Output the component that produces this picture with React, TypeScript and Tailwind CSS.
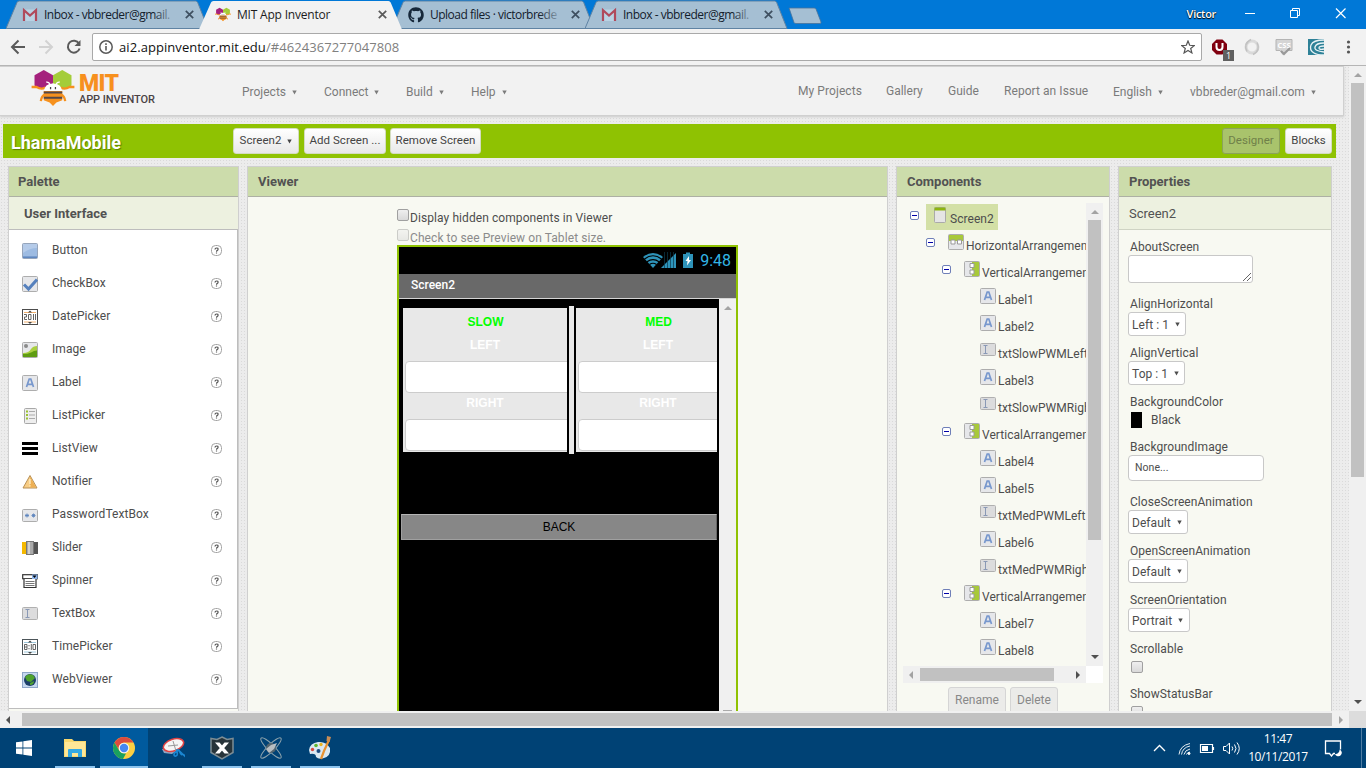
import React from "react";
import { FaGithub } from "react-icons/fa";

const CHROME_FONT = "font-['Open_Sans','Noto_Sans',sans-serif]";

/* ---------- browser chrome ---------- */

function Gmail() {
  return (
    <svg width="16" height="16" viewBox="0 0 16 16">
      <rect x="1" y="2.500" width="14" height="11.500" fill="#b9d3e4" />
      <path d="M2 14V3.200l6 5.300 6-5.300V14" fill="none" stroke="#b04a5c" strokeWidth="2.200" />
    </svg>
  );
}

function Bee({ className, w, h }: { className?: string; w: number; h: number }) {
  return (
    <svg className={className} width={w} height={h} viewBox="0 0 44 37">
      <path d="M3 5.500 12.500 0 22 5.500v8l-7 6H8l-5-3.500z" fill="#a5217d" />
      <path d="M22 5.500 31.500 0 41 5.500V16l-5 3.500h-7l-7-6z" fill="#a4cd39" />
      <path d="M0 17.500h5q5 3 9 .5M44 17.500h-5q-5 3-9 .5" fill="none" stroke="#f6911e" strokeWidth="2.400" />
      <path d="M14 25q-4 2-4.500 7M30 25q4 2 4.500 7" fill="none" stroke="#f6911e" strokeWidth="2.400" />
      <path d="M13 22q0-8 9-8t9 8z" fill="#fff" />
      <path d="M15 12.500q3-.5 4 3M29 12.500q-3-.5-4 3" stroke="#fff" strokeWidth="1.400" fill="none" />
      <path d="M19.500 17.500v2.200M24.500 17.500v2.200" stroke="#444" strokeWidth="1.300" />
      <path d="M12.500 21.500h19V31l-6 2.500L22 37l-3.500-3.500-6-2.500z" fill="#f6911e" />
      <path d="M12.500 23.200h19M12.500 28.500h19" stroke="#54484a" strokeWidth="2" />
    </svg>
  );
}

function Tab({ icon, title, active, fade, tracking }: { icon: React.ReactNode; title: string; active?: boolean; fade?: boolean; tracking: string }) {
  return (
    <div className={`relative -mr-[10px] h-[29px] w-[203px] shrink-0 ${active ? "z-10" : "z-0"}`}>
      <svg className="absolute inset-0" width="203" height="29">
        <path
          d={active ? "M0 29.500 12 2.500Q12.500 1 14.500 1H189.500Q191 1 191.700 2.500L203 29.500z" : "M0 28.500 11 2.500Q11.500 1 13.500 1H189.500Q191 1 191.700 2.500L202 28.500z"}
          fill={active ? "#f2f2f2" : "#a5bfd3"}
          stroke={active ? "none" : "#5f83a3"}
          strokeWidth="1"
        />
      </svg>
      <div className="relative flex h-[29px] items-center pl-4">
        {icon}
        <span className={`relative ml-[6px] w-[133px] overflow-hidden text-[12px] leading-[18px] whitespace-nowrap ${tracking} ${active ? "text-[#1c1c1c]" : "text-[#13202d]"}`}>
          {title}
          {fade && <span className="absolute inset-y-0 right-0 w-6 bg-linear-to-r from-[#a5bfd300] to-[#a5bfd3]" />}
        </span>
        <svg className="ml-[8px]" width="9" height="9" viewBox="0 0 9 9">
          <path d="M.8.8l7.400 7.400M8.200.8.8 8.200" stroke={active ? "#5a5a5a" : "#3e4f60"} strokeWidth="1.700" />
        </svg>
      </div>
    </div>
  );
}

function TabStrip() {
  return (
    <div className={`flex h-[29px] shrink-0 bg-[#0078d7] pl-[6px] ${CHROME_FONT}`}>
      <Tab icon={<Gmail />} title="Inbox - vbbreder@gmail." fade tracking="tracking-[-0.5px]" />
      <Tab icon={<Bee w={16} h={15} />} title="MIT App Inventor" active tracking="tracking-[-0.2px]" />
      <Tab icon={<FaGithub size={16} color="#16283a" />} title="Upload files · victorbrede" fade tracking="tracking-[-0.5px]" />
      <Tab icon={<Gmail />} title="Inbox - vbbreder@gmail." fade tracking="tracking-[-0.5px]" />
      <svg className="mt-[7px] ml-[10px]" width="34" height="18">
        <path d="M1 1h25q1.500 0 2 1l5 13q.5 1.500-1 1.500H8q-1.500 0-2-1z" fill="#a5bfd3" stroke="#47729a" strokeWidth=".8" />
      </svg>
      <div className="ml-auto flex items-start pr-[18px] pt-[5px]">
        <span className="mt-[1px] mr-[28px] text-[11px] leading-4 font-semibold tracking-[-0.3px] text-white [text-shadow:0_0_1px_#000,0_1px_1px_#000]">Victor</span>
        <svg width="104" height="18" className="text-white" fill="none" stroke="currentColor">
          <path d="M1 8.500h10M46.500 5.500h7v7h-7zM48.500 5.500v-2h7v7h-2" />
          <path d="m92 3.500 9.500 9.500M101.500 3.500 92 13" strokeWidth="1.200" />
        </svg>
      </div>
    </div>
  );
}

function Toolbar() {
  return (
    <div className={`flex h-[37px] shrink-0 items-start border-b border-[#b5b5b5] bg-[#f2f2f2] pt-1 ${CHROME_FONT}`}>
      <svg width="92" height="28" viewBox="0 0 92 28" fill="none" strokeWidth="2">
        <path d="M25 14H12.500M18.500 7.500 12 14l6.500 6.500" stroke="#5a5a5a" />
        <path d="M39 14h12.500M45.500 7.500 52 14l-6.500 6.500" stroke="#d2d2d2" />
        <path d="M79 10.500a6 6 0 1 0 .6 5" stroke="#5a5a5a" />
        <path d="M80.500 7v6h-6z" fill="#5a5a5a" />
      </svg>
      <div className="flex h-[28px] w-[1110px] items-center rounded-[2px] border border-[#a9a9a9] bg-white pl-[6px]">
        <svg width="14" height="14" viewBox="0 0 14 14" fill="none" stroke="#5a5a5a">
          <circle cx="7" cy="7" r="6.200" strokeWidth="1.500" />
          <path d="M7 6v4.500M7 3.300v1.700" strokeWidth="1.600" />
        </svg>
        <span className="ml-[6px] text-[13px] leading-[18px] tracking-[0.07px] whitespace-nowrap text-[#111]">
          ai2.appinventor.mit.edu<span className="text-[#808080]">/#4624367277047808</span>
        </span>
        <svg className="mr-[6px] ml-auto" width="14" height="14" viewBox="0 0 14 14">
          <path d="m7 1 1.700 4.300 4.500.3-3.500 2.900 1.200 4.400L7 10.400l-3.900 2.500 1.200-4.400L.8 5.600l4.500-.3z" fill="none" stroke="#555" strokeWidth="1.200" />
        </svg>
      </div>
      <svg className="ml-[8px]" width="150" height="30" viewBox="0 0 150 30">
        <path d="M5.500 6h6l4.500 4.500v6L11.500 21h-6L1 16.500v-6z" transform="translate(1 .5)" fill="#800010" />
        <path d="M6.500 10v4q0 3 3 3t3-3v-4" fill="none" stroke="#fff" strokeWidth="2" />
        <rect x="13" y="17" width="11" height="11" fill="#606060" />
        <text x="18.500" y="26" fontSize="9" fill="#fff" textAnchor="middle" fontFamily="Open Sans">1</text>
        <circle cx="42" cy="14" r="6" fill="none" stroke="#dadada" strokeWidth="3" />
        <path d="M41 6.500q-8 4-4 12M43 21.500q8-4 4-12" fill="none" stroke="#c2c2c2" strokeWidth="1.500" />
        <path d="M66 6.500h16v11h-6l-3 4-3-4h-4z" fill="#d5d5d5" stroke="#b4b4b4" />
        <text x="74" y="15" fontSize="7.500" fontWeight="bold" fill="#fff" textAnchor="middle" fontFamily="Open Sans">CSS</text>
        <path d="m71 18 3 3 6-6" fill="none" stroke="#999" strokeWidth="2" />
        <rect x="98" y="6" width="16" height="16" fill="#2e8197" />
        <path d="M114 7q-11 0-13 5t3 8q3 2 10 2M114 10q-8 0-9 4t9 5M114 13q-5 0-5 2t5 1" fill="none" stroke="#e8f2f5" strokeWidth="1.300" />
        <g fill="#555"><circle cx="138.500" cy="9" r="1.600" /><circle cx="138.500" cy="14" r="1.600" /><circle cx="138.500" cy="19" r="1.600" /></g>
      </svg>
    </div>
  );
}

/* ---------- small shared pieces ---------- */

function Caret({ className = "" }: { className?: string }) {
  return (
    <svg className={className} width="5" height="5" viewBox="0 0 5 5">
      <path d="M.3.500h4.400L2.500 4.500z" fill="currentColor" />
    </svg>
  );
}

function Arrow({ dir, color }: { dir: "up" | "down" | "left" | "right"; color: string }) {
  const d = { up: "M0 6 4 2l4 4z", down: "M0 2h8L4 6z", left: "M6 0v8L2 4z", right: "M2 0v8l4-4z" }[dir];
  return (
    <svg width="8" height="8" viewBox="0 0 8 8" className="shrink-0">
      <path d={d} fill={color} />
    </svg>
  );
}

function CheckBox({ faded }: { faded?: boolean }) {
  return <span className={`block size-[12px] shrink-0 rounded-[2px] border border-[#a0a0a0] bg-linear-to-b from-[#efefef] to-[#d9d9d9] ${faded ? "opacity-50" : ""}`} />;
}

type IconKind = "button" | "checkbox" | "date" | "image" | "label" | "listpicker" | "listview" | "notifier" | "password" | "slider" | "spinner" | "textbox" | "time" | "web" | "screen" | "horizontal" | "vertical";

function Plate({ y = 0.5, h = 15 }: { y?: number; h?: number }) {
  return <rect x=".5" y={y} width="15" height={h} rx="1" fill="#e6e7ea" stroke="#adadad" />;
}

function Icon({ kind }: { kind: IconKind }) {
  const art: Record<IconKind, React.ReactNode> = {
    button: (<><rect x=".5" y=".5" width="15" height="15" rx="1" fill="#9dbbe2" stroke="#96a5bb" /><path d="M1 1h14v4Q8 5 1 10z" fill="#b5cbe9" /><path d="M1 14.200h14" stroke="#5f87c0" strokeWidth="1.600" /></>),
    checkbox: (<><Plate /><path d="M2 8.500 6.500 13 15 3.500" fill="none" stroke="#5580bd" strokeWidth="3" /></>),
    date: (<><rect x=".5" y=".5" width="15" height="15" fill="#fff" stroke="#4c4c4c" /><path d="M2 3.500h12M2 13h12" stroke="#f0b070" /><path d="M6 3.500 8 1.500l2 2zM6 13l2 2 2-2z" fill="#444" /><path d="M2 5.500h2.500V8H2.500v2.500H5M6.500 5.500H9v5H6.500zM11.500 5v6M13.500 5v6" fill="none" stroke="#555" strokeWidth=".9" /></>),
    image: (<><Plate /><circle cx="4" cy="4" r="2" fill="#8b8b8b" /><path d="M1 11q6 0 8-4 2-3 6-3v11H1z" fill="#a9cf40" /><path d="M1 12q5 0 8-1.500 3-2 6-2V15H1z" fill="#5f9c12" /></>),
    label: (<><Plate /><path d="m4.500 12 2.700-8h1.600l2.700 8M5.800 9.300h4.400" fill="none" stroke="#7797cd" strokeWidth="1.700" /></>),
    listpicker: (<><rect x="2.500" y=".5" width="12" height="15" rx="1" fill="#eee" stroke="#a8a8a8" /><path d="M4 3.500h2M4 7h2M4 10.500h2" stroke="#9bc332" strokeWidth="2" /><path d="M7 3.500h6M7 7h6M7 10.500h6" stroke="#aaa" /></>),
    listview: (<path d="M0 2.500h16M0 7.500h16M0 12.500h16" stroke="#000" strokeWidth="3" />),
    notifier: (<><path d="M8 1.500 15 14H1z" fill="#f8cd85" stroke="#b89056" /><path d="M8 2.500v11H14z" fill="#eeb054" /><path d="M8 5v5M8 11.300v1.300" stroke="#fff3d0" strokeWidth="1.200" /></>),
    password: (<><rect x=".5" y="2.500" width="15" height="12" rx="1" fill="#e6e7ea" stroke="#adadad" /><path d="M3 8.500h4M5 6.500v4M3.600 7.100l2.800 2.800M6.400 7.100 3.600 9.900M9.500 8.500h4M11.500 6.500v4M10.100 7.100l2.800 2.800M12.900 7.100l-2.800 2.800" stroke="#5b83bd" strokeWidth=".9" /></>),
    slider: (<><path d="M0 2h5v12H0z" fill="#f4b800" /><path d="M11 2h5v12h-5z" fill="#555" /><rect x="4.500" y="1.500" width="7" height="13" fill="#aaa" stroke="#777" /><path d="M7 2v12" stroke="#ddd" strokeWidth="1.500" /></>),
    spinner: (<><rect x=".7" y="1.700" width="14.600" height="4" fill="#fff" stroke="#333" strokeWidth="1.200" /><rect x="10" y="1.500" width="5.500" height="4.500" fill="#8db4ea" /><path d="M10.500 2.500h4L12.500 5z" fill="#000" /><path d="M2 6v8.500h12V6" fill="#fff" stroke="#333" strokeWidth="1.200" /><path d="M3.500 8.500h9M3.500 10.500h9M3.500 12.500h9" stroke="#777" /></>),
    textbox: (<><rect x=".5" y="1.500" width="15" height="12" rx="1" fill="#dcdcdd" stroke="#b0b0b0" /><path d="M3.500 3.500h4M3.500 11.500h4M5.500 3.500v8" stroke="#8a99b5" /></>),
    time: (<><rect x=".5" y=".5" width="15" height="15" fill="#fff" stroke="#4c5559" /><path d="M2 3.500h12M2 13h12" stroke="#9fc8dc" /><path d="M6 3.500 8 1.500l2 2zM6 13l2 2 2-2z" fill="#444" /><path d="M2.500 5.500H5v5H2.500zM2.500 8H5M7 6v1.300M7 9v1.300M9.300 5v6M11 5.500h2.500v5H11z" fill="none" stroke="#555" strokeWidth=".9" /></>),
    web: (<><rect x=".5" y=".5" width="15" height="15" fill="#c5d8ef" stroke="#8ea6c8" /><circle cx="8" cy="8" r="6" fill="#1c3f68" /><path d="M3 5q3-4 8-2l2 3-4 4-4-1zM8 11l4-2q0 4-4 4z" fill="#4fa32e" /></>),
    screen: (<><rect x="2.500" y=".5" width="11" height="15" rx="1" fill="#e5e5e5" stroke="#aaa" /><path d="M2.500 2h11" stroke="#8db50f" strokeWidth="3" /></>),
    horizontal: (<><Plate /><path d="M1 1h14v6H1z" fill="#a8c93a" /><path d="M3 6h4v4H3zM9.500 6h4v4h-4z" fill="#fff" stroke="#999" /></>),
    vertical: (<><Plate /><path d="M8 1h7v14H8z" fill="#a8c93a" /><path d="M6 2.500h4v4H6zM6 9h4v4H6z" fill="#fff" stroke="#999" /></>),
  };
  return <svg width="16" height="16" viewBox="0 0 16 16" className="shrink-0">{art[kind]}</svg>;
}

/* ---------- app header ---------- */

function MenuItem({ label, caret = true, className }: { label: string; caret?: boolean; className: string }) {
  return (
    <span className={`flex h-[48px] shrink-0 items-center whitespace-nowrap ${caret ? "pt-[2px]" : ""} ${className}`}>
      {label}
      {caret && <Caret className="ml-[6px]" />}
    </span>
  );
}

function AppHeader() {
  return (
    <div className="flex h-[50px] w-[1344px] shrink-0 border-t border-r border-b border-[#d0d0d0] bg-[#f2f2f2] text-[12px] leading-[20px] text-[#7b7b7b] shadow-[0_1px_2px_#ccc]">
      <div className="flex w-[242px] pt-[3px] pl-[31px] leading-none">
        <Bee w={44} h={36} />
        <div className="pl-1">
          <div className="mt-[3px] text-[23px] leading-[22px] font-black tracking-[-0.6px] text-[#f7901e]">MIT</div>
          <div className="text-[11px] leading-[10px] font-medium tracking-[-0.1px] whitespace-nowrap text-[#4b4345]">APP INVENTOR</div>
        </div>
      </div>
      <MenuItem label="Projects" className="w-[82px]" />
      <MenuItem label="Connect" className="w-[82px]" />
      <MenuItem label="Build" className="w-[65px]" />
      <MenuItem label="Help" className="w-[327px]" />
      <MenuItem label="My Projects" caret={false} className="w-[88px] tracking-[0.08px]" />
      <MenuItem label="Gallery" caret={false} className="w-[62px]" />
      <MenuItem label="Guide" caret={false} className="w-[56px]" />
      <MenuItem label="Report an Issue" caret={false} className="w-[109px] tracking-[0.06px]" />
      <MenuItem label="English" className="w-[77px]" />
      <MenuItem label="vbbreder@gmail.com" className="w-[140px] tracking-[0.05px]" />
    </div>
  );
}

function BarButton({ children, className }: { children: React.ReactNode; className: string }) {
  return (
    <div className={`flex h-[26px] items-center justify-center rounded-[3px] border text-[11.5px] tracking-[0.04px] whitespace-nowrap ${className}`}>{children}</div>
  );
}

function ProjectBar() {
  const light = "border-[#d4dcc0] bg-linear-to-b from-white to-[#e8e8e8] text-[#444]";
  return (
    <div className="mt-2 ml-[3px] flex h-[34px] w-[1333px] shrink-0 items-center bg-[#8fc202] pr-1">
      <div className="w-[230px] pt-[2px] pl-2 text-[18px] font-bold text-white [text-shadow:1px_1px_1px_#5d7f00]">LhamaMobile</div>
      <BarButton className={`w-[66px] ${light}`}>Screen2<Caret className="ml-[6px]" /></BarButton>
      <BarButton className={`ml-[5px] w-[82px] ${light}`}>Add Screen ...</BarButton>
      <BarButton className={`ml-[4px] w-[91px] ${light}`}>Remove Screen</BarButton>
      <BarButton className="ml-auto w-[58px] border-[#8ba35a] bg-[#a9c36c] text-[#6f8049]">Designer</BarButton>
      <BarButton className={`ml-[5px] w-[47px] ${light}`}>Blocks</BarButton>
    </div>
  );
}

/* ---------- panels ---------- */

function Panel({ title, className, pad = "pl-[10px]", children }: { title: string; className: string; pad?: string; children: React.ReactNode }) {
  return (
    <section className={`flex flex-col overflow-hidden border border-b-0 border-[#cfcfcf] bg-[#f8f9f2] ${className}`}>
      <h2 className={`h-[30px] shrink-0 border-b border-[#adb0a4] bg-[#ccdcab] text-[13px] leading-[29px] font-bold text-[#525252] ${pad}`}>{title}</h2>
      {children}
    </section>
  );
}

const PALETTE: [IconKind, string][] = [
  ["button", "Button"], ["checkbox", "CheckBox"], ["date", "DatePicker"], ["image", "Image"], ["label", "Label"],
  ["listpicker", "ListPicker"], ["listview", "ListView"], ["notifier", "Notifier"], ["password", "PasswordTextBox"],
  ["slider", "Slider"], ["spinner", "Spinner"], ["textbox", "TextBox"], ["time", "TimePicker"], ["web", "WebViewer"],
];

function Palette() {
  return (
    <Panel title="Palette" pad="pl-[9px]" className="ml-[8px] w-[231px]">
      <div className="h-[32px] shrink-0 bg-[#edf1e0] pl-[15px] text-[13px] leading-[34px] font-bold text-[#525252]">User Interface</div>
      <div className="h-[480px] shrink-0 border border-l-0 border-[#bdbdbd] bg-white pt-[4px]">
        {PALETTE.map(([kind, name]) => (
          <div key={name} className="flex h-[33px] items-center pr-[15px] pl-[13px]">
            <Icon kind={kind} />
            <span className="-mt-[2px] ml-[14px] text-[12px] tracking-[0.05px] text-[#4d4d4d]">{name}</span>
            <svg className="-mt-px ml-auto" width="11" height="11" viewBox="0 0 11 11" fill="none">
              <rect x=".5" y=".5" width="10" height="10" rx="4" stroke="#a3a3a3" />
              <path d="M4 4.400q0-1.400 1.600-1.400t1.500 1.300q0 1-1.500 1.700v.7M5.500 7.500v1" stroke="#555" strokeWidth="1.200" />
            </svg>
          </div>
        ))}
      </div>
    </Panel>
  );
}

function SpeedColumn({ title, className }: { title: string; className: string }) {
  return (
    <div className={`mt-[9px] h-[144px] shrink-0 overflow-hidden bg-[#e8e8e8] ${className}`}>
      <div className="flex w-[164px] flex-col pt-[3px] pl-[2px] text-center font-bold text-white">
        <div className="h-[23px] pr-px leading-[23px] text-[#00ff00]">{title}</div>
        <div className="h-[27px] pr-[2px] leading-[23px]">LEFT</div>
        <div className="h-[32px] w-[180px] rounded-[4px] border border-[#ccc] bg-white" />
        <div className="h-[26px] pr-[2px] leading-[21px]">RIGHT</div>
        <div className="h-[32px] w-[180px] rounded-[4px] border border-[#ccc] bg-white" />
      </div>
    </div>
  );
}

function Viewer() {
  return (
    <Panel title="Viewer" className="ml-[8px] w-[641px]">
      <div className="ml-[149px] w-[341px] text-[12px] tracking-[0.08px]">
        <div className="mt-[10px] flex h-[20px] items-center text-[#4d4d4d]">
          <span className="-mt-[4px]"><CheckBox /></span><span className="ml-[1px] pt-[2px]">Display hidden components in Viewer</span>
        </div>
        <div className="flex h-[18px] items-center text-[#8b8b8b]">
          <span className="-mt-[2px]"><CheckBox faded /></span><span className="ml-[1px] pt-[3px]">Check to see Preview on Tablet size.</span>
        </div>
        <div className="h-[480px] border-2 border-[#8fc202] bg-black tracking-normal">
          <div className="flex h-[27px] items-center justify-end pr-[5px]">
            <svg width="51" height="17" viewBox="0 0 51 17">
              <path d="M0 5Q10-3 20 5L10 16z" fill="#2e93b9" />
              <path d="M1.500 7Q10 .5 18.500 7M4 9.800Q10 5.500 16 9.800M6.500 12.500q3.500-2.500 7 0" fill="none" stroke="#000" strokeWidth="1.200" />
              <path d="M33 1v15H18z" fill="#2e93b9" />
              <path d="M21.500 0v16M24.500 0v16M27.500 0v16M30.500 0v16" stroke="#0c3b4d" strokeWidth=".7" />
              <path d="M40 2h3V.5h4V2h3v14H40z" fill="#2e93b9" />
              <path d="m46 4-3.500 5h2L44 13.500 48 8h-2z" fill="#fff" />
            </svg>
            <span className="ml-[6px] text-[16px] leading-[27px] text-[#33b5e5]">9:48</span>
          </div>
          <div className="h-[25px] border-b border-[#d5d5d5] bg-[#696969] pl-[12px] leading-[22px] font-medium text-white">Screen2</div>
          <div className="flex h-[424px]">
            <div className="w-[320px]">
              <div className="flex h-[215px] pr-[2px] pl-[4px] font-['Liberation_Sans',Arial,sans-serif]">
                <SpeedColumn title="SLOW" className="w-[164px]" />
                <div className="mt-[7px] ml-[2px] h-[148px] w-[5px] shrink-0 bg-[#e8e8e8]" />
                <SpeedColumn title="MED" className="ml-[2px] w-[141px]" />
              </div>
              <div className="mr-[2px] ml-[2px] h-[26px] border border-t-[#b5b5b5] border-r-[#666] border-b-[#a0a0a0] border-l-[#a0a0a0] bg-[#878787] text-center font-['Liberation_Sans',Arial,sans-serif] leading-[24px] text-black">BACK</div>
            </div>
            <div className="flex w-[17px] flex-col items-center bg-[#f0f0f0] pt-[5px]">
              <Arrow dir="up" color="#a3a3a3" />
              <span className="mt-[398px] h-[2px] w-[9px] bg-[#aaa]" />
            </div>
          </div>
        </div>
      </div>
    </Panel>
  );
}

const TREE: [number, IconKind, string, boolean][] = [
  [0, "screen", "Screen2", true],
  [1, "horizontal", "HorizontalArrangement1", true],
  [2, "vertical", "VerticalArrangement1", true],
  [3, "label", "Label1", false],
  [3, "label", "Label2", false],
  [3, "textbox", "txtSlowPWMLeft", false],
  [3, "label", "Label3", false],
  [3, "textbox", "txtSlowPWMRight", false],
  [2, "vertical", "VerticalArrangement2", true],
  [3, "label", "Label4", false],
  [3, "label", "Label5", false],
  [3, "textbox", "txtMedPWMLeft", false],
  [3, "label", "Label6", false],
  [3, "textbox", "txtMedPWMRight", false],
  [2, "vertical", "VerticalArrangement3", true],
  [3, "label", "Label7", false],
  [3, "label", "Label8", false],
];

const INDENT = ["pl-[7px]", "pl-[23px]", "pl-[39px]", "pl-[55px]"];

function Components() {
  return (
    <Panel title="Components" className="ml-[8px] w-[214px]">
      <div className="mt-[6px] ml-[6px] flex h-[463px] w-[200px] shrink-0">
        <div className="w-[183px] overflow-hidden pt-[1px]">
          {TREE.map(([depth, kind, name, open]) => (
            <div key={name} className={`flex h-[27px] ${INDENT[depth]}`}>
              <span className="w-[16px] shrink-0 pt-[7px]">
                {open && (
                  <svg width="9" height="9" viewBox="0 0 9 9">
                    <rect x=".5" y=".5" width="8" height="8" rx="1.500" fill="#fff" stroke="#6f7fb8" />
                    <path d="M2 4.500h5" stroke="#0000a8" />
                  </svg>
                )}
              </span>
              <span className={`flex h-[26px] shrink-0 pr-[4px] pl-[6px] ${depth === 0 ? "bg-[#d3e0a6]" : ""}`}>
                <span className="pt-[3px]"><Icon kind={kind} /></span>
                <span className="ml-[2px] text-[12px] leading-[30px] tracking-[0.04px] whitespace-nowrap text-[#4d4d4d]">{name}</span>
              </span>
            </div>
          ))}
        </div>
        <div className="flex w-[17px] flex-col items-center bg-[#f0f0f0] pt-[5px] pb-[5px]">
          <Arrow dir="up" color="#a3a3a3" />
          <div className="mt-[4px] h-[320px] w-[13px] bg-[#c1c1c1]" />
          <div className="mt-auto"><Arrow dir="down" color="#505050" /></div>
        </div>
      </div>
      <div className="ml-[6px] flex h-[17px] w-[200px] shrink-0 bg-white">
        <div className="flex w-[183px] items-center bg-[#f0f0f0] px-[4px]">
          <Arrow dir="left" color="#a3a3a3" />
          <div className="ml-[5px] h-[13px] w-[134px] bg-[#c1c1c1]" />
          <div className="ml-auto"><Arrow dir="right" color="#505050" /></div>
        </div>
      </div>
      <div className="mt-[4px] flex justify-center gap-[4px] text-[12px] text-[#888]">
        <div className="h-[30px] w-[58px] rounded-[3px] border border-[#d5d5d5] bg-[#ebebe9] text-center leading-[24px]">Rename</div>
        <div className="h-[30px] w-[48px] rounded-[3px] border border-[#d5d5d5] bg-[#ebebe9] text-center leading-[24px]">Delete</div>
      </div>
    </Panel>
  );
}

function Property({ name, className, children }: { name: string; className: string; children: React.ReactNode }) {
  return (
    <div className={`shrink-0 ${className}`}>
      <div className="h-[18px] pl-[2px] leading-[20px]">{name}</div>
      {children}
    </div>
  );
}

function Select({ value, className }: { value: string; className: string }) {
  return (
    <div className={`flex h-[24px] items-center rounded-[3px] border border-[#c8c8c8] bg-white pt-px pl-[3px] whitespace-nowrap ${className}`}>
      {value}<Caret className="mb-px ml-[6px]" />
    </div>
  );
}

function Properties() {
  return (
    <Panel title="Properties" className="ml-[8px] w-[214px]">
      <div className="h-[33px] shrink-0 border-b border-[#cfd3c4] bg-[#edf1e0] pl-[10px] text-[13px] leading-[33px] text-[#525252]">Screen2</div>
      <div className="flex flex-col pt-[7px] pl-[9px] text-[12px] tracking-[0.05px] text-[#4d4d4d]">
        <Property name="AboutScreen" className="h-[57px]">
          <div className="flex h-[28px] w-[125px] items-end justify-end rounded-[3px] border border-[#c8c8c8] bg-white p-px">
            <svg width="8" height="8"><path d="M0 8 8 0M4 8l4-4" stroke="#666" /></svg>
          </div>
        </Property>
        <Property name="AlignHorizontal" className="h-[49px]"><Select value="Left : 1" className="w-[58px]" /></Property>
        <Property name="AlignVertical" className="h-[49px]"><Select value="Top : 1" className="w-[57px]" /></Property>
        <Property name="BackgroundColor" className="h-[45px]">
          <div className="flex h-[20px] items-center pl-[3px]"><span className="mr-[9px] h-[16px] w-[11px] bg-black" />Black</div>
        </Property>
        <Property name="BackgroundImage" className="h-[55px]">
          <div className="h-[26px] w-[136px] rounded-[4px] border border-[#c8c8c8] bg-white pl-[6px] text-[10.5px] leading-[24px]">None...</div>
        </Property>
        <Property name="CloseScreenAnimation" className="h-[49px]"><Select value="Default" className="w-[60px]" /></Property>
        <Property name="OpenScreenAnimation" className="h-[49px]"><Select value="Default" className="w-[60px]" /></Property>
        <Property name="ScreenOrientation" className="h-[49px]"><Select value="Portrait" className="w-[62px]" /></Property>
        <Property name="Scrollable" className="h-[45px]"><div className="pt-[4px] pl-[3px]"><CheckBox /></div></Property>
        <Property name="ShowStatusBar" className="h-[45px]"><div className="pt-[4px] pl-[3px]"><CheckBox /></div></Property>
      </div>
    </Panel>
  );
}

/* ---------- taskbar ---------- */

function TaskCell({ children, active, running }: { children: React.ReactNode; active?: boolean; running?: boolean }) {
  return (
    <div className={`mr-px flex h-[40px] w-[48px] flex-col items-center ${active ? "bg-[#005a9e]" : ""}`}>
      <div className="flex h-[38px] items-center pt-[2px]">{children}</div>
      <div className={`h-[2px] ${active ? "w-[48px] bg-[#8dc4ee]" : running ? "w-[40px] bg-[#8dc4ee]" : "w-0"}`} />
    </div>
  );
}

function Taskbar() {
  return (
    <div className="flex h-[40px] shrink-0 bg-[#004275]">
      <div className="flex w-[51px] items-center pl-[16px]">
        <svg width="16" height="16" viewBox="0 0 16 16" fill="#fff"><path d="M0 2.300 6.500 1.400V7.600H0zM7.300 1.300 16 0v7.600H7.300zM0 8.400h6.500v6.200L0 13.700zM7.300 8.400H16V16l-8.700-1.300z" /></svg>
      </div>
      <TaskCell running>
        <svg width="22" height="18" viewBox="0 0 22 18"><path d="M0 0h8l2 2h12v16H0z" fill="#f8d86f" /><path d="M1 3h20v14H1z" fill="#ffe797" /><path d="M4 18v-7q0-1 1-1h12q1 0 1 1v7h-4v-4H8v4z" fill="#35a9e3" /></svg>
      </TaskCell>
      <TaskCell active running>
        <svg width="22" height="22" viewBox="0 0 22 22"><circle cx="11" cy="11" r="11" fill="#fccf42" /><path d="M1.500 5.500A11 11 0 0 1 20.500 5.500H11A5.500 5.500 0 0 0 6 13z" fill="#dd4b3e" /><path d="M1.500 5.500 6.300 13.700Q8 16.500 11 16.500h2L10 22A11 11 0 0 1 1.500 5.500z" fill="#19a15f" /><circle cx="11" cy="11" r="5.300" fill="#f4f4f4" /><circle cx="11" cy="11" r="4.200" fill="#4787f2" /></svg>
      </TaskCell>
      <TaskCell>
        <svg width="24" height="22" viewBox="0 0 24 22"><path d="m1 12 2 4 8 1 9-7z" fill="#8fa5c2" /><ellipse cx="12.500" cy="8" rx="10.500" ry="5.800" transform="rotate(-18 12.500 8)" fill="#f5f5f5" stroke="#e04343" strokeWidth="1.500" /><path d="m12 4 3 10M7 9l10-1" stroke="#999" /><path d="M15 13.500q-3 1-3 3t2 1.500 1-4.500 4.500 1.500 3.500 3-3-1.500-3-4.500" transform="translate(1 1)" fill="none" stroke="#1b87d2" strokeWidth="1.600" /></svg>
      </TaskCell>
      <TaskCell running>
        <svg width="24" height="24" viewBox="0 0 24 24"><path d="m12 1 5 2.500 6-1v14L12 23 1 16.500v-14l6 1z" fill="#27343a" stroke="#7d8d94" strokeWidth="1.500" /><path d="M5 6.500h4.500l9.500 11h-4.500zM14.500 6.500H19l-9.500 11H5z" fill="#fff" /></svg>
      </TaskCell>
      <TaskCell running>
        <svg width="24" height="24" viewBox="0 0 24 24" fill="none" stroke="#8fa5ae"><ellipse cx="12" cy="12" rx="14" ry="3.500" transform="rotate(45 12 12)" /><ellipse cx="12" cy="12" rx="14" ry="3.500" transform="rotate(-45 12 12)" /><circle cx="12" cy="12" r="5" fill="#52646f" stroke="none" /><path d="m7 13 5-4 6-2-3 6-5 4z" fill="#b8bec2" stroke="none" /></svg>
      </TaskCell>
      <TaskCell running>
        <svg width="24" height="24" viewBox="0 0 24 24"><path d="M1 14Q2 7 10 6q8-1 12 6 1 8-6 10-5 2-8-1 0-4-6-3z" fill="#d9e8f2" /><circle cx="4.500" cy="13.500" r="1.700" fill="#d6483e" /><circle cx="8" cy="9.500" r="1.800" fill="#5cb531" /><circle cx="13" cy="8.500" r="1.700" fill="#eab420" /><circle cx="10.500" cy="15" r="2" fill="#1b4a80" /><path d="m21 4-5 11-3 8" stroke="#e79232" strokeWidth="2.200" fill="none" /><path d="m19 0 4 1-1.500 5-3-1z" fill="#c98d55" /></svg>
      </TaskCell>
      <div className="ml-auto flex items-center text-white">
        <svg width="88" height="20" viewBox="0 0 88 20" fill="none" stroke="#fff">
          <path d="m1 13 5.500-5.500L12 13" strokeWidth="1.300" />
          <path d="M26 16.500q1-9 11-11M28.500 16.500q1-7 8.500-8.500M31 16.500q1-4.500 6-5.500M33.500 16.500q.5-2 3.500-2.500" strokeWidth=".9" />
          <circle cx="36" cy="15.500" r="1" fill="#fff" />
          <path d="M47.500 6.500h12v8h-12zM60.500 9v3" strokeWidth="1.200" /><path d="M49 8h6v5h-6z" fill="#fff" stroke="none" />
          <path d="M70.500 8.500h2.500l3.500-3.500v11L73 12.500h-2.500zM79 8.500q1.500 2 0 4M81.500 6.500q3 4 0 8M84 4.500q4.500 6 0 12" />
        </svg>
        <div className={`ml-[5px] w-[64px] text-center text-[12px] leading-[18px] tracking-[-0.4px] ${CHROME_FONT}`}>
          <div>11:47</div>
          <div>10/11/2017</div>
        </div>
        <svg className="mr-[19px] ml-[14px]" width="18" height="17" viewBox="0 0 18 17">
          <path d="M11 13.500H9.500l-2 2.500-2-2.500h-4V1h15v8.500" fill="none" stroke="#fff" strokeWidth="1.300" />
          <path d="M15.500 9.500a3.500 3.500 0 1 1-4.500 4.500 4 4 0 0 0 4.500-4.500" fill="#fff" />
        </svg>
        <div className="mr-[4px] h-[40px] w-px bg-[#4f7da3]" />
      </div>
    </div>
  );
}

export default function App() {
  return (
    <div className="flex h-[768px] w-[1366px] flex-col overflow-hidden font-[Roboto,sans-serif]">
      <TabStrip />
      <Toolbar />
      <div className="flex h-[645px] shrink-0">
        <main className="flex w-[1349px] shrink-0 flex-col overflow-hidden bg-[#ececec] bg-[radial-gradient(#dadada_0.6px,transparent_0.9px)] bg-[size:3px_3px]">
          <AppHeader />
          <ProjectBar />
          <div className="mt-[8px] flex h-[545px] shrink-0">
            <Palette />
            <Viewer />
            <Components />
            <Properties />
          </div>
        </main>
        <div className="flex w-[17px] flex-col items-center bg-[#f0f0f0] pt-[5px] pb-[5px]">
          <Arrow dir="up" color="#a3a3a3" />
          <div className="mt-[4px] h-[394px] w-[13px] bg-[#c1c1c1]" />
          <div className="mt-auto"><Arrow dir="down" color="#505050" /></div>
        </div>
      </div>
      <div className="flex h-[17px] shrink-0 bg-[#dcdcdc]">
        <div className="flex w-[1349px] items-center bg-[#f0f0f0] px-[4px]">
          <Arrow dir="left" color="#505050" />
          <div className="ml-[10px] h-[13px] w-[1310px] bg-[#c1c1c1]" />
          <div className="ml-auto"><Arrow dir="right" color="#a3a3a3" /></div>
        </div>
      </div>
      <Taskbar />
    </div>
  );
}
